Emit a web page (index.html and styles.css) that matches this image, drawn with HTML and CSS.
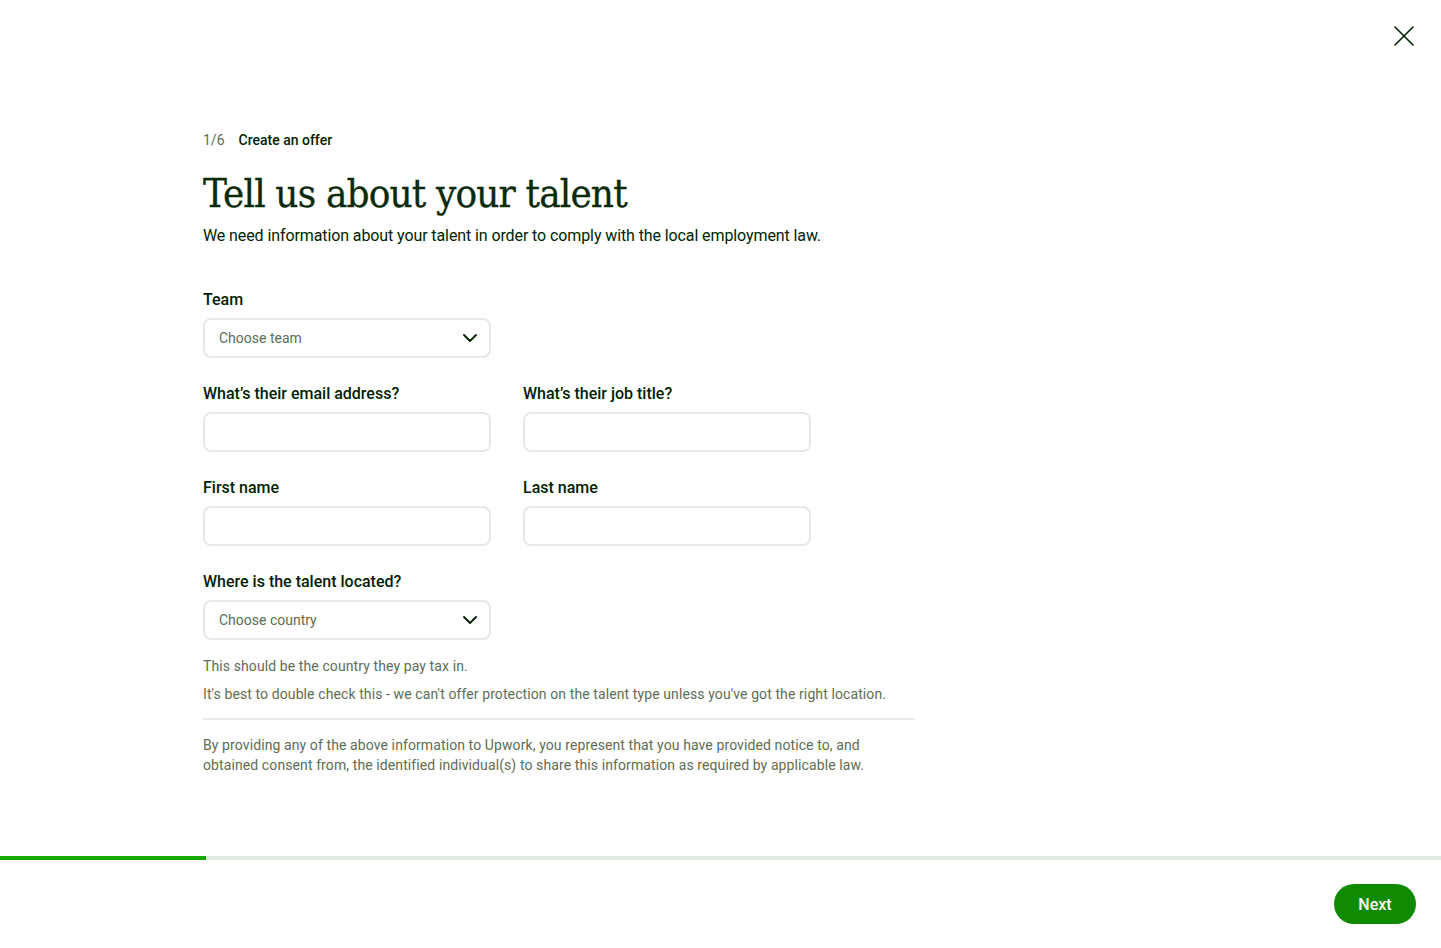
FILE: index.html
```html
<!DOCTYPE html>
<html lang="en">
<head>
<meta charset="utf-8">
<title>Create an offer</title>
<link rel="stylesheet" href="styles.css">
</head>
<body>
<div class="page">
  <header class="topbar">
    <button class="close" aria-label="Close">
      <svg width="20" height="20" viewBox="0 0 20 20"><path d="M1 1L19 19M19 1L1 19" stroke="#001e00" stroke-width="1.6" stroke-linecap="round" fill="none"/></svg>
    </button>
  </header>
  <main class="content">
    <div class="step"><span class="step-num">1/6</span><span class="step-name">Create an offer</span></div>
    <h1 class="title">Tell us about your talent</h1>
    <p class="subtitle">We need information about your talent in order to comply with the local employment law.</p>

    <div class="form">
      <div class="field">
        <label class="label">Team</label>
        <div class="select"><span>Choose team</span>
          <svg width="14" height="8" viewBox="0 0 14 8"><path d="M1 1L7 7L13 1" stroke="#001e00" stroke-width="1.8" fill="none" stroke-linecap="round" stroke-linejoin="round"/></svg>
        </div>
      </div>
      <div class="row">
        <div class="field">
          <label class="label">What’s their email address?</label>
          <div class="input"></div>
        </div>
        <div class="field">
          <label class="label">What’s their job title?</label>
          <div class="input"></div>
        </div>
      </div>
      <div class="row">
        <div class="field">
          <label class="label">First name</label>
          <div class="input"></div>
        </div>
        <div class="field">
          <label class="label">Last name</label>
          <div class="input"></div>
        </div>
      </div>
      <div class="field">
        <label class="label">Where is the talent located?</label>
        <div class="select"><span>Choose country</span>
          <svg width="14" height="8" viewBox="0 0 14 8"><path d="M1 1L7 7L13 1" stroke="#001e00" stroke-width="1.8" fill="none" stroke-linecap="round" stroke-linejoin="round"/></svg>
        </div>
      </div>
    </div>

    <div class="notes">
      <p class="help">This should be the country they pay tax in.</p>
      <p class="help">It's best to double check this - we can't offer protection on the talent type unless you've got the right location.</p>
      <hr class="divider">
      <p class="consent">By providing any of the above information to Upwork, you represent that you have provided notice to, and obtained consent from, the identified individual(s) to share this information as required by applicable law.</p>
    </div>
  </main>
  <footer class="footer">
    <div class="progress"><div class="progress-fill" style="width:206px"></div></div>
    <div class="actions"><button class="next">Next</button></div>
  </footer>
</div>
</body>
</html>
```
FILE: styles.css
```css
* { box-sizing: border-box; }
html, body { margin: 0; padding: 0; background: #fff; }
body { font-family: Roboto, "Liberation Sans", sans-serif; color: #001e00; }
.page { display: flex; flex-direction: column; height: 948px; }
.topbar { display: flex; justify-content: flex-end; padding: 26px 27px 0 0; height: 90px; }
.close { background: none; border: 0; padding: 0; width: 20px; height: 20px; cursor: pointer; }
.content { flex: 1; padding: 40px 0 0 203px; }
.step { display: flex; gap: 14px; font-size: 14px; line-height: 20px; }
.step-num { color: #5e6d55; }
.step-name { color: #001e00; font-weight: 500; }
.title { font-family: "DejaVu Serif", "Liberation Serif", serif; font-stretch: condensed; font-weight: 400; font-size: 40px; line-height: 52px; margin: 17px 0 0; color: #0b2a0b; letter-spacing: -0.85px; -webkit-text-stroke: 0.3px #0b2a0b; }
.subtitle { font-size: 16px; line-height: 24px; margin: 5px 0 0; letter-spacing: -0.1px; }
.form { display: flex; flex-direction: column; gap: 24px; margin-top: 40px; width: 608px; }
.row { display: grid; grid-template-columns: 288px 288px; gap: 32px; }
.field { display: flex; flex-direction: column; gap: 6px; width: 288px; }
.label { font-size: 16px; line-height: 24px; font-weight: 500; }
.input, .select { height: 40px; border: 2px solid #e4ebe4; border-radius: 8px; background: #fff; }
.select { display: flex; align-items: center; justify-content: space-between; padding: 0 12px 0 14px; font-size: 14px; color: #5e6d55; }
.notes { width: 712px; margin-top: 16px; }
.help { font-size: 14px; line-height: 20px; color: #5e6d55; margin: 0 0 8px; white-space: nowrap; letter-spacing: 0.1px; }
.divider { border: 0; border-top: 2px solid #e4ebe4; margin: 14px 0 15px; }
.consent { font-size: 14px; line-height: 20px; color: #5e6d55; margin: 0; width: 680px; letter-spacing: 0.1px; }
.footer { display: flex; flex-direction: column; }
.progress { height: 4px; background: #e4ebe4; }
.progress-fill { height: 4px; background: #14a800; }
.actions { display: flex; justify-content: flex-end; padding: 24px 25px 24px 0; }
.next { height: 40px; width: 82px; border: 0; border-radius: 20px; background: #108a00; color: #fff; font-family: Roboto, "Liberation Sans", sans-serif; font-size: 16px; font-weight: 500; cursor: pointer; }
```
